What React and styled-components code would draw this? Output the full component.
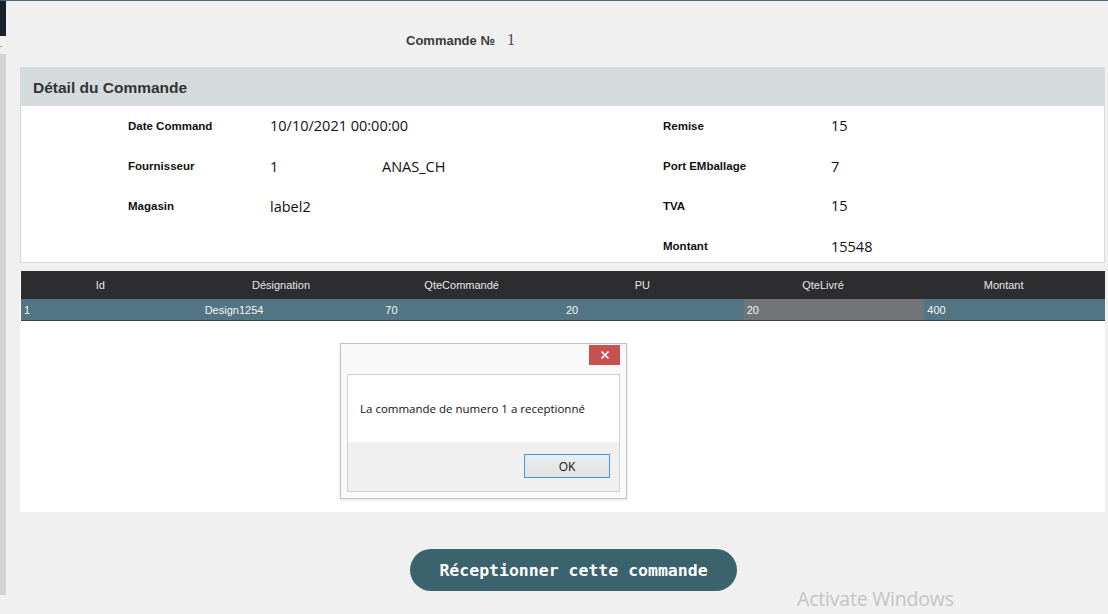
import React from "react";
import styled, { createGlobalStyle } from "styled-components";

const GlobalStyle = createGlobalStyle`
  html, body {
    margin: 0;
    padding: 0;
    background: #f0f0f0;
    font-family: "Liberation Sans", Arial, sans-serif;
  }
`;

const Page = styled.div`
  position: relative;
  display: flex;
  width: 1108px;
  height: 614px;
  box-sizing: border-box;
  border-top: 1px solid #4a6778;
  background: #f0f0f0;
  overflow: hidden;
`;

const Rail = styled.div`
  width: 6px;
  display: flex;
  flex-direction: column;
`;

const RailTop = styled.div`
  height: 35px;
  background: #17222e;
`;

const RailDash = styled.div`
  margin-top: 10px;
  width: 2px;
  height: 1px;
  background: #9a9a9a;
`;

const RailBody = styled.div`
  margin-top: 7px;
  height: 541px;
  background: #d3d3d3;
`;

const Main = styled.div`
  flex: 1;
  display: flex;
  flex-direction: column;
  padding: 0 3px 0 14px;
`;

const OrderLine = styled.div`
  height: 66px;
  box-sizing: border-box;
  padding: 30px 0 0 386px;
  display: flex;
  align-items: baseline;
  gap: 12px;
`;

const OrderLabel = styled.span`
  font-size: 13px;
  font-weight: 700;
  color: #3a3a3a;
`;

const OrderValue = styled.span`
  font-family: "Liberation Serif", "Times New Roman", serif;
  font-size: 16px;
  color: #3c4456;
`;

const PanelHeader = styled.div`
  height: 39px;
  background: #d5dadd;
  display: flex;
  align-items: center;
  padding: 2px 0 0 13px;
  box-sizing: border-box;
  font-size: 15.5px;
  font-weight: 700;
  color: #333;
`;

const PanelBody = styled.div`
  height: 157px;
  box-sizing: border-box;
  background: #fff;
  border: 1px solid #dadada;
  border-top: none;
  display: flex;
  padding: 10px 0 0 107px;
`;

const InfoColumn = styled.div`
  width: ${(p) => p.width}px;
  display: grid;
  grid-auto-rows: 40px;
  align-content: start;
`;

const Field = styled.div`
  display: grid;
  grid-template-columns: ${(p) => p.labelWidth}px ${(p) => (p.extra ? "112px auto" : "auto")};
  align-items: center;
  height: 16px;
`;

const Label = styled.span`
  font-size: 11.5px;
  font-weight: 700;
  color: #111;
`;

const Value = styled.span`
  font-family: "Open Sans", "Noto Sans", sans-serif;
  font-size: 14.5px;
  color: #111;
  margin-top: ${(p) => (p.low ? 1 : 0)}px;
`;

const Grid = styled.div`
  margin-top: 8px;
  background: #fff;
  height: 241px;
  display: flex;
  flex-direction: column;
`;

const GridHeader = styled.div`
  display: grid;
  grid-template-columns: repeat(6, 1fr);
  height: 28px;
  background: #2d2d30;
  margin-left: 1px;
`;

const HeadCell = styled.div`
  display: flex;
  align-items: center;
  justify-content: center;
  padding-right: 22px;
  font-size: 11px;
  color: #e6e6e6;
`;

const GridRow = styled.div`
  display: grid;
  grid-template-columns: repeat(6, 1fr);
  height: 21px;
  margin-left: 1px;
  border-bottom: 1px solid #34464f;
`;

const Cell = styled.div`
  display: flex;
  align-items: center;
  padding-left: 3px;
  font-size: 11px;
  color: #f4f4f4;
  background: ${(p) => (p.muted ? "#727577" : "#537483")};
`;

const ButtonRow = styled.div`
  margin-top: 37px;
  padding-left: 390px;
`;

const ReceiveButton = styled.button`
  width: 327px;
  height: 42px;
  border: none;
  border-radius: 21px;
  background: #3b636e;
  color: #fff;
  font-family: "DejaVu Sans Mono", "Liberation Mono", monospace;
  font-weight: 700;
  font-size: 16.5px;
  cursor: pointer;
`;

const Dialog = styled.div`
  position: absolute;
  left: 340px;
  top: 342px;
  width: 287px;
  height: 156px;
  box-sizing: border-box;
  background: #f9f9f9;
  border: 1px solid #c2c2c2;
  box-shadow: 0 1px 3px rgba(0, 0, 0, 0.12);
  display: flex;
  flex-direction: column;
  padding: 1px 6px 6px 6px;
`;

const TitleBar = styled.div`
  height: 29px;
  display: flex;
  justify-content: flex-end;
  align-items: flex-start;
`;

const CloseButton = styled.div`
  width: 31px;
  height: 20px;
  background: #c75050;
  display: flex;
  align-items: center;
  justify-content: center;
`;

const DialogInner = styled.div`
  flex: 1;
  border: 1px solid #d0d0d0;
  display: flex;
  flex-direction: column;
`;

const Message = styled.div`
  height: 67px;
  background: #fff;
  display: flex;
  align-items: center;
  padding-left: 12px;
  font-family: "Open Sans", "Noto Sans", sans-serif;
  font-size: 11.5px;
  color: #111;
`;

const DialogFooter = styled.div`
  flex: 1;
  background: #f0f0f0;
  display: flex;
  justify-content: flex-end;
  align-items: flex-start;
  padding: 12px 9px 0 0;
`;

const OkButton = styled.button`
  width: 86px;
  height: 24px;
  border: 1px solid #3c9ae8;
  background: linear-gradient(#ececec, #e2e2e2);
  font-family: "Open Sans", "Noto Sans", sans-serif;
  font-size: 12px;
  color: #111;
  padding: 0;
`;

const Watermark = styled.div`
  position: absolute;
  left: 797px;
  top: 584px;
  font-family: "Open Sans", "Noto Sans", sans-serif;
  font-size: 19.5px;
  color: #c4c4c4;
  letter-spacing: -0.2px;
`;

const columns = ["Id", "Désignation", "QteCommandé", "PU", "QteLivré", "Montant"];
const row = ["1", "Design1254", "70", "20", "20", "400"];

export default function App() {
  return (
    <>
      <GlobalStyle />
      <Page>
        <Rail>
          <RailTop />
          <RailDash />
          <RailBody />
        </Rail>
        <Main>
          <OrderLine>
            <OrderLabel>Commande №</OrderLabel>
            <OrderValue>1</OrderValue>
          </OrderLine>
          <PanelHeader>Détail du Commande</PanelHeader>
          <PanelBody>
            <InfoColumn width={535}>
              <Field labelWidth={142}>
                <Label>Date Command</Label>
                <Value>10/10/2021 00:00:00</Value>
              </Field>
              <Field labelWidth={142} extra>
                <Label>Fournisseur</Label>
                <Value low>1</Value>
                <Value low>ANAS_CH</Value>
              </Field>
              <Field labelWidth={142}>
                <Label>Magasin</Label>
                <Value low>label2</Value>
              </Field>
            </InfoColumn>
            <InfoColumn width={300}>
              <Field labelWidth={168}>
                <Label>Remise</Label>
                <Value>15</Value>
              </Field>
              <Field labelWidth={168}>
                <Label>Port EMballage</Label>
                <Value low>7</Value>
              </Field>
              <Field labelWidth={168}>
                <Label>TVA</Label>
                <Value>15</Value>
              </Field>
              <Field labelWidth={168}>
                <Label>Montant</Label>
                <Value low>15548</Value>
              </Field>
            </InfoColumn>
          </PanelBody>
          <Grid>
            <GridHeader>
              {columns.map((c) => (
                <HeadCell key={c}>{c}</HeadCell>
              ))}
            </GridHeader>
            <GridRow>
              {row.map((v, i) => (
                <Cell key={i} muted={i === 4}>
                  {v}
                </Cell>
              ))}
            </GridRow>
          </Grid>
          <ButtonRow>
            <ReceiveButton>Réceptionner cette commande</ReceiveButton>
          </ButtonRow>
        </Main>
        <Dialog>
          <TitleBar>
            <CloseButton>
              <svg width="10" height="10" viewBox="0 0 10 10">
                <path d="M1.5 1.5 L8.5 8.5 M8.5 1.5 L1.5 8.5" stroke="#fff" strokeWidth="1.7" />
              </svg>
            </CloseButton>
          </TitleBar>
          <DialogInner>
            <Message>La commande de numero 1 a receptionné</Message>
            <DialogFooter>
              <OkButton>OK</OkButton>
            </DialogFooter>
          </DialogInner>
        </Dialog>
        <Watermark>Activate Windows</Watermark>
      </Page>
    </>
  );
}
